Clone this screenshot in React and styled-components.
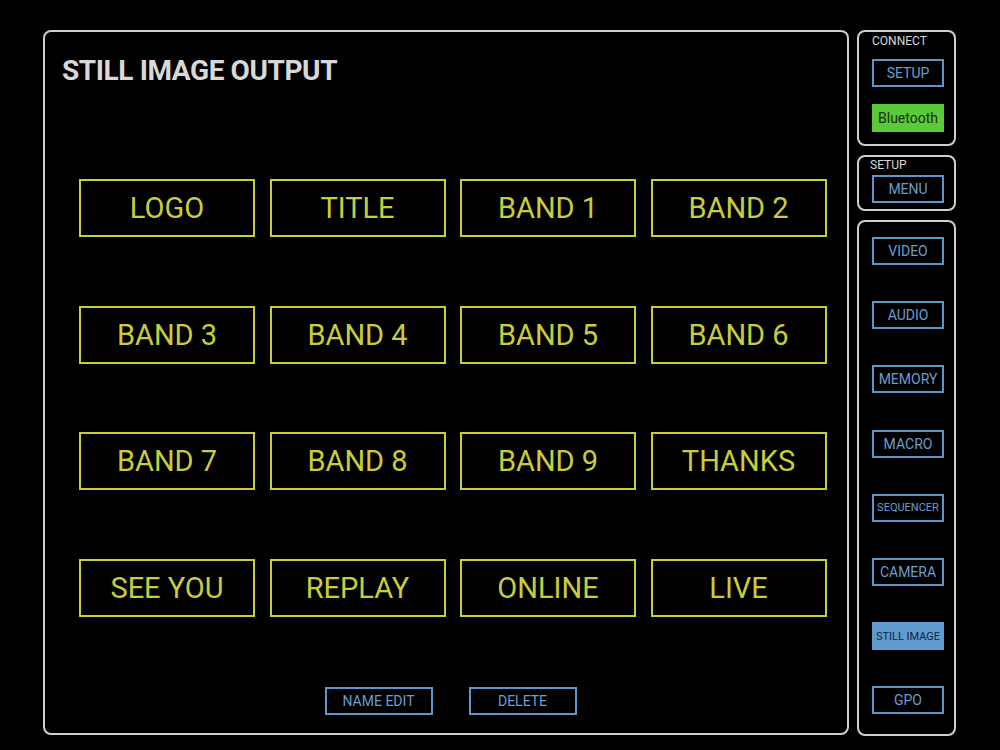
import React from "react";
import styled, { createGlobalStyle } from "styled-components";

const Global = createGlobalStyle`
  html, body { margin: 0; padding: 0; background: #000; }
  body { font-family: Roboto, "Liberation Sans", sans-serif; }
`;

const Page = styled.div`
  width: 1000px;
  height: 750px;
  background: #000;
  display: flex;
  gap: 8px;
  padding: 30px 0 0 43px;
  box-sizing: border-box;
`;

const MainPanel = styled.div`
  width: 806px;
  height: 705px;
  box-sizing: border-box;
  border: 2px solid #cfcfcf;
  border-radius: 8px;
  display: flex;
  flex-direction: column;
  padding: 0 0 0 17px;
`;

const Title = styled.h1`
  margin: 22px 0 0 0;
  font-family: Roboto, "Liberation Sans", sans-serif;
  font-weight: 700;
  font-size: 28px;
  letter-spacing: -0.4px;
  line-height: 34px;
  color: #d8d8d8;
`;

const Grid = styled.div`
  display: grid;
  grid-template-columns: repeat(4, 176px);
  grid-auto-rows: 58px;
  column-gap: 14.5px;
  row-gap: 68.5px;
  margin: 91px 0 0 17px;
`;

const Tile = styled.button`
  box-sizing: border-box;
  background: #000;
  border: 2px solid #c9cd3a;
  color: #c9cd3a;
  font-family: Roboto, "Liberation Sans", sans-serif;
  font-size: 29px;
  font-weight: 400;
  padding: 0;
  display: flex;
  align-items: center;
  justify-content: center;
`;

const BottomBar = styled.div`
  display: flex;
  justify-content: center;
  gap: 36px;
  margin-top: auto;
  margin-bottom: 18px;
  padding-right: 8px;
`;

const OutlineButton = styled.button`
  box-sizing: border-box;
  width: ${(p) => p.$w || 72}px;
  height: 28px;
  padding: 0;
  margin-top: ${(p) => p.$mt || 0}px;
  background: ${(p) => (p.$fill ? p.$fill : "#000")};
  border: 2px solid ${(p) => (p.$fill ? p.$fill : "#5f96c7")};
  color: ${(p) => p.$color || "#6b9dcd"};
  font-family: Roboto, "Liberation Sans", sans-serif;
  font-size: ${(p) => p.$fs || 14}px;
  font-weight: 400;
  display: flex;
  align-items: center;
  justify-content: center;
  white-space: nowrap;
`;

const SideColumn = styled.div`
  width: 99px;
  display: flex;
  flex-direction: column;
  gap: 9px;
`;

const SidePanel = styled.div`
  box-sizing: border-box;
  height: ${(p) => p.$h}px;
  border: 2px solid #cfcfcf;
  border-radius: 8px;
  display: flex;
  flex-direction: column;
  padding: ${(p) => p.$pad};
  gap: ${(p) => p.$gap}px;
`;

const PanelLabel = styled.div`
  font-family: Roboto, "Liberation Sans", sans-serif;
  font-size: 12px;
  line-height: 14px;
  color: #d8d8d8;
  margin: ${(p) => p.$m};
`;

const tiles = [
  "LOGO", "TITLE", "BAND 1", "BAND 2",
  "BAND 3", "BAND 4", "BAND 5", "BAND 6",
  "BAND 7", "BAND 8", "BAND 9", "THANKS",
  "SEE YOU", "REPLAY", "ONLINE", "LIVE",
];

const menu = [
  { t: "VIDEO" },
  { t: "AUDIO" },
  { t: "MEMORY" },
  { t: "MACRO" },
  { t: "SEQUENCER", fs: 11 },
  { t: "CAMERA" },
  { t: "STILL IMAGE", fs: 11, fill: "#609bd0", color: "#10243a" },
  { t: "GPO" },
];

export default function App() {
  return (
    <>
      <Global />
      <Page>
        <MainPanel>
          <Title>STILL IMAGE OUTPUT</Title>
          <Grid>
            {tiles.map((t) => (
              <Tile key={t}>{t}</Tile>
            ))}
          </Grid>
          <BottomBar>
            <OutlineButton $w={108}>NAME EDIT</OutlineButton>
            <OutlineButton $w={108}>DELETE</OutlineButton>
          </BottomBar>
        </MainPanel>
        <SideColumn>
          <SidePanel $h={116} $pad="2px 0 0 13px" $gap={0}>
            <PanelLabel $m="0 0 11px 0">CONNECT</PanelLabel>
            <OutlineButton>SETUP</OutlineButton>
            <OutlineButton $mt={17} $fill="#5cc93a" $color="#14300c">
              Bluetooth
            </OutlineButton>
          </SidePanel>
          <SidePanel $h={56} $pad="1px 0 0 13px" $gap={3}>
            <PanelLabel $m="0 0 0 -2px">SETUP</PanelLabel>
            <OutlineButton>MENU</OutlineButton>
          </SidePanel>
          <SidePanel $h={516} $pad="15px 0 0 13px" $gap={36.2}>
            {menu.map((m) => (
              <OutlineButton key={m.t} $fs={m.fs} $fill={m.fill} $color={m.color}>
                {m.t}
              </OutlineButton>
            ))}
          </SidePanel>
        </SideColumn>
      </Page>
    </>
  );
}
